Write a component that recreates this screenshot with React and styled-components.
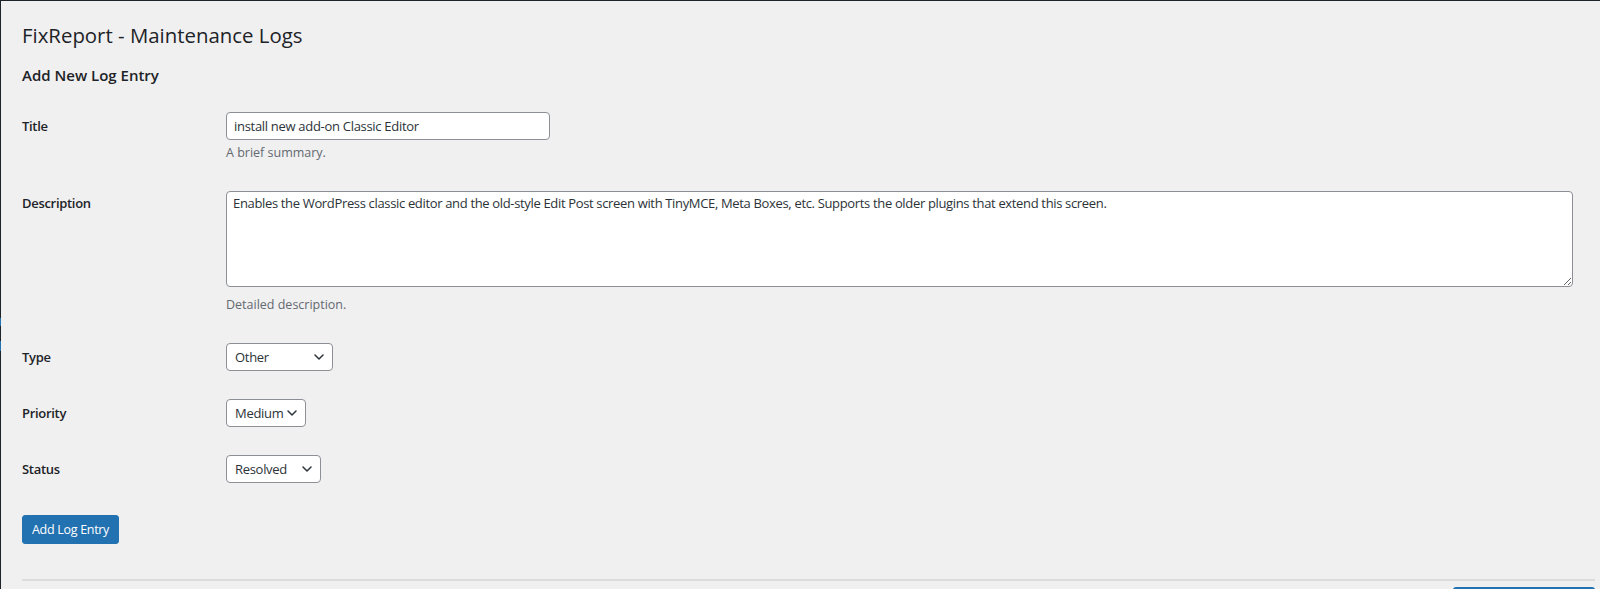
import React from 'react';
import styled, { createGlobalStyle } from 'styled-components';

const GlobalStyle = createGlobalStyle`
  html, body {
    margin: 0;
    padding: 0;
    height: 589px;
    overflow: hidden;
    background: #f0f0f1;
  }
  body {
    font-family: "Open Sans", "Noto Sans", sans-serif;
    color: #1d2327;
  }
`;

const Screen = styled.div`
  display: flex;
  height: 589px;
  border-top: 1px solid #1d2327;
  box-sizing: border-box;
  overflow: hidden;
`;

const MenuEdge = styled.div`
  width: 1px;
  flex: none;
  background: linear-gradient(
    to bottom,
    #1d2327 0,
    #1d2327 317px,
    #2271b1 317px,
    #2271b1 325px,
    #1d2327 325px,
    #1d2327 340px,
    #2271b1 340px,
    #2271b1 350px,
    #1d2327 350px
  );
`;

const Wrap = styled.main`
  flex: 1;
  padding: 11px 5px 0 21px;
  min-width: 0;
`;

const PageTitle = styled.h1`
  margin: 0;
  font-size: 20.4px;
  font-weight: 400;
  line-height: 46px;
  color: #1d2327;
`;

const SectionTitle = styled.h2`
  margin: 0;
  font-size: 15px;
  font-weight: 600;
  line-height: 34px;
  color: #1d2327;
`;

const Form = styled.form`
  display: flex;
  flex-direction: column;
  padding-top: 6px;
`;

const Row = styled.div`
  display: grid;
  grid-template-columns: 204px 1fr;
  padding: 14px 0;
`;

const Label = styled.label`
  font-size: 13px;
  font-weight: 600;
  letter-spacing: -0.3px;
  line-height: 20px;
  padding-top: ${({ $top }) => $top ?? 4}px;
  color: #1d2327;
`;

const Field = styled.div`
  display: flex;
  flex-direction: column;
  align-items: flex-start;
`;

const TextInput = styled.input`
  box-sizing: border-box;
  width: 324px;
  height: 28px;
  padding: 0 7px;
  border: 1px solid #8c8f94;
  border-radius: 4px;
  background: #fff;
  font-family: inherit;
  font-size: 13px;
  letter-spacing: -0.3px;
  color: #2c3338;
  outline: none;
`;

const TextArea = styled.textarea`
  display: block;
  box-sizing: border-box;
  width: calc(100% - 22px);
  height: 96px;
  padding: 2px 6px;
  border: 1px solid #8c8f94;
  border-radius: 4px;
  background: #fff;
  font-family: inherit;
  font-size: 13px;
  letter-spacing: -0.34px;
  line-height: 1.4;
  color: #2c3338;
  resize: both;
  outline: none;
`;

const Help = styled.p`
  margin: ${({ $gap }) => $gap ?? 3}px 0 0;
  font-size: 12.5px;
  line-height: 20px;
  color: #646970;
`;

const SelectBox = styled.div`
  position: relative;
  width: ${({ $width }) => $width}px;
`;

const Select = styled.select`
  appearance: none;
  box-sizing: border-box;
  width: 100%;
  height: 28px;
  padding: 0 18px 0 8px;
  border: 1px solid #8c8f94;
  border-radius: 4px;
  background: #fff;
  font-family: inherit;
  font-size: 13px;
  letter-spacing: -0.3px;
  color: #2c3338;
  outline: none;
`;

const Chevron = styled.svg`
  position: absolute;
  right: 9px;
  top: 11px;
  width: 10px;
  height: 6px;
  pointer-events: none;
`;

const Submit = styled.div`
  padding: 18px 0 35px;
`;

const PrimaryButton = styled.button`
  height: 29px;
  padding: 0 9px;
  border: 1px solid #2271b1;
  border-radius: 3px;
  background: #2271b1;
  color: #fff;
  font-family: inherit;
  font-size: 12.5px;
  letter-spacing: -0.3px;
  cursor: pointer;
`;

const Divider = styled.hr`
  margin: 0;
  border: 0;
  border-top: 2px solid #dcdcde;
`;

const NextBar = styled.div`
  display: flex;
  justify-content: flex-end;
  padding-top: 6px;
`;

const NextButton = styled.div`
  width: 142px;
  height: 28px;
  border-radius: 3px;
  background: #2271b1;
`;

function Dropdown({ width, value, options }) {
  return (
    <SelectBox $width={width}>
      <Select defaultValue={value}>
        {options.map((o) => (
          <option key={o}>{o}</option>
        ))}
      </Select>
      <Chevron viewBox="0 0 10 6" fill="none">
        <path d="M1 1l4 4 4-4" stroke="#2c3338" strokeWidth="1.5" strokeLinecap="round" strokeLinejoin="round" />
      </Chevron>
    </SelectBox>
  );
}

export default function App() {
  return (
    <>
      <GlobalStyle />
      <Screen>
        <MenuEdge />
        <Wrap>
          <PageTitle>FixReport - Maintenance Logs</PageTitle>
          <SectionTitle>Add New Log Entry</SectionTitle>
          <Form onSubmit={(e) => e.preventDefault()}>
            <Row>
              <Label>Title</Label>
              <Field>
                <TextInput defaultValue="install new add-on Classic Editor" />
                <Help>A brief summary.</Help>
              </Field>
            </Row>
            <Row>
              <Label $top={2}>Description</Label>
              <Field>
                <TextArea defaultValue="Enables the WordPress classic editor and the old-style Edit Post screen with TinyMCE, Meta Boxes, etc. Supports the older plugins that extend this screen." />
                <Help $gap={8}>Detailed description.</Help>
              </Field>
            </Row>
            <Row>
              <Label>Type</Label>
              <Field>
                <Dropdown width={107} value="Other" options={['Bug Fix', 'Update', 'Other']} />
              </Field>
            </Row>
            <Row>
              <Label>Priority</Label>
              <Field>
                <Dropdown width={80} value="Medium" options={['Low', 'Medium', 'High']} />
              </Field>
            </Row>
            <Row>
              <Label>Status</Label>
              <Field>
                <Dropdown width={95} value="Resolved" options={['Open', 'Resolved']} />
              </Field>
            </Row>
            <Submit>
              <PrimaryButton type="submit">Add Log Entry</PrimaryButton>
            </Submit>
          </Form>
          <Divider />
          <NextBar>
            <NextButton />
          </NextBar>
        </Wrap>
      </Screen>
    </>
  );
}
